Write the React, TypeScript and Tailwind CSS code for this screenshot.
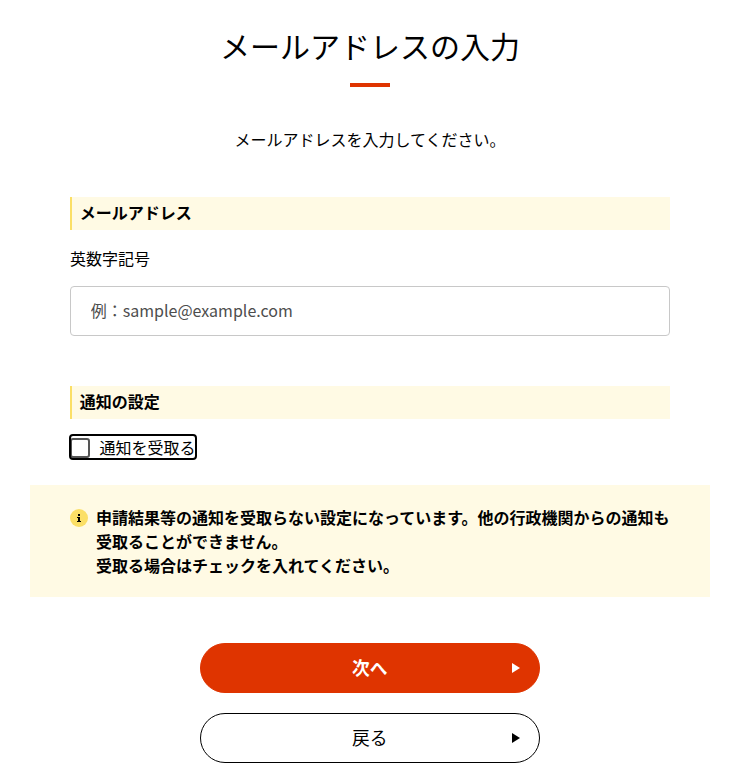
type ActionButtonProps = {
  label: string;
  primary?: boolean;
};

const SectionHeading = ({ children }: { children: string }) => (
  <h2 className="h-[33px] border-l-2 border-[#fbdf66] bg-[#fffae4] pl-[7.8px] text-base leading-[30px] font-bold">
    {children}
  </h2>
);

const ActionButton = ({ label, primary = false }: ActionButtonProps) => (
  <button
    type="button"
    className={`relative h-[50px] w-[340px] rounded-full border pr-[0.5px] pb-0.5 text-[17.8px] leading-6 ${
      primary
        ? "border-[#df3400] bg-[#df3400] font-bold text-white"
        : "border-black bg-white text-black"
    }`}
  >
    {label}
    <svg
      className="absolute top-[19px] right-[19px]"
      width="8"
      height="10"
      viewBox="0 0 8 10"
      fill="currentColor"
    >
      <path d="M0 0L8 5L0 10Z" />
    </svg>
  </button>
);

const App = () => {
  return (
    <main className="h-[776px] overflow-hidden bg-white pl-[30px] font-['Noto_Sans_CJK_JP',sans-serif] text-base leading-6 text-black">
      <div className="flex w-[680px] flex-col items-center">
        <h1 className="mt-[23px] text-[30px] leading-[45px] font-normal">メールアドレスの入力</h1>
        <div className="mt-[15px] h-1 w-10 bg-[#df3400]" />
        <p className="mt-10">メールアドレスを入力してください。</p>

        <section className="mt-[46px] w-[600px]">
          <SectionHeading>メールアドレス</SectionHeading>
          <label htmlFor="email" className="mt-4 block">
            英数字記号
          </label>
          <input
            id="email"
            type="email"
            placeholder="例：sample@example.com"
            className="mt-4 block h-[50px] w-full rounded border border-[#c8c8c8] pr-5 pb-0.5 pl-[19.8px] placeholder:text-[#4d4d4d]"
          />
        </section>

        <section className="mt-[50px] w-[600px]">
          <SectionHeading>通知の設定</SectionHeading>
          <label className="mt-[17px] ml-px flex h-[22px] w-[124px] items-center rounded-[2px] whitespace-nowrap outline-2 outline-black">
            <input
              type="checkbox"
              className="mr-[9.5px] -ml-px size-5 shrink-0 appearance-none self-end rounded-[3px] border-2 border-[#555555] bg-white"
            />
            通知を受取る
          </label>
        </section>

        <div className="mt-[27px] flex h-28 w-full bg-[#fffae4] pt-5 pl-10 font-bold">
          <svg className="mt-1 mr-2 shrink-0" width="18" height="18" viewBox="0 0 18 18">
            <circle cx="9" cy="9" r="9" fill="#fbdf66" />
            <path d="M8 5h2v2H8zM7 8h3v4h1v1H7v-1h1V9H7z" fill="#000" />
          </svg>
          <p>
            申請結果等の通知を受取らない設定になっています。他の行政機関からの通知も
            <br />
            受取ることができません。
            <br />
            受取る場合はチェックを入れてください。
          </p>
        </div>

        <div className="mt-[46px] flex flex-col gap-5">
          <ActionButton label="次へ" primary />
          <ActionButton label="戻る" />
        </div>
      </div>
    </main>
  );
};

export default App;
